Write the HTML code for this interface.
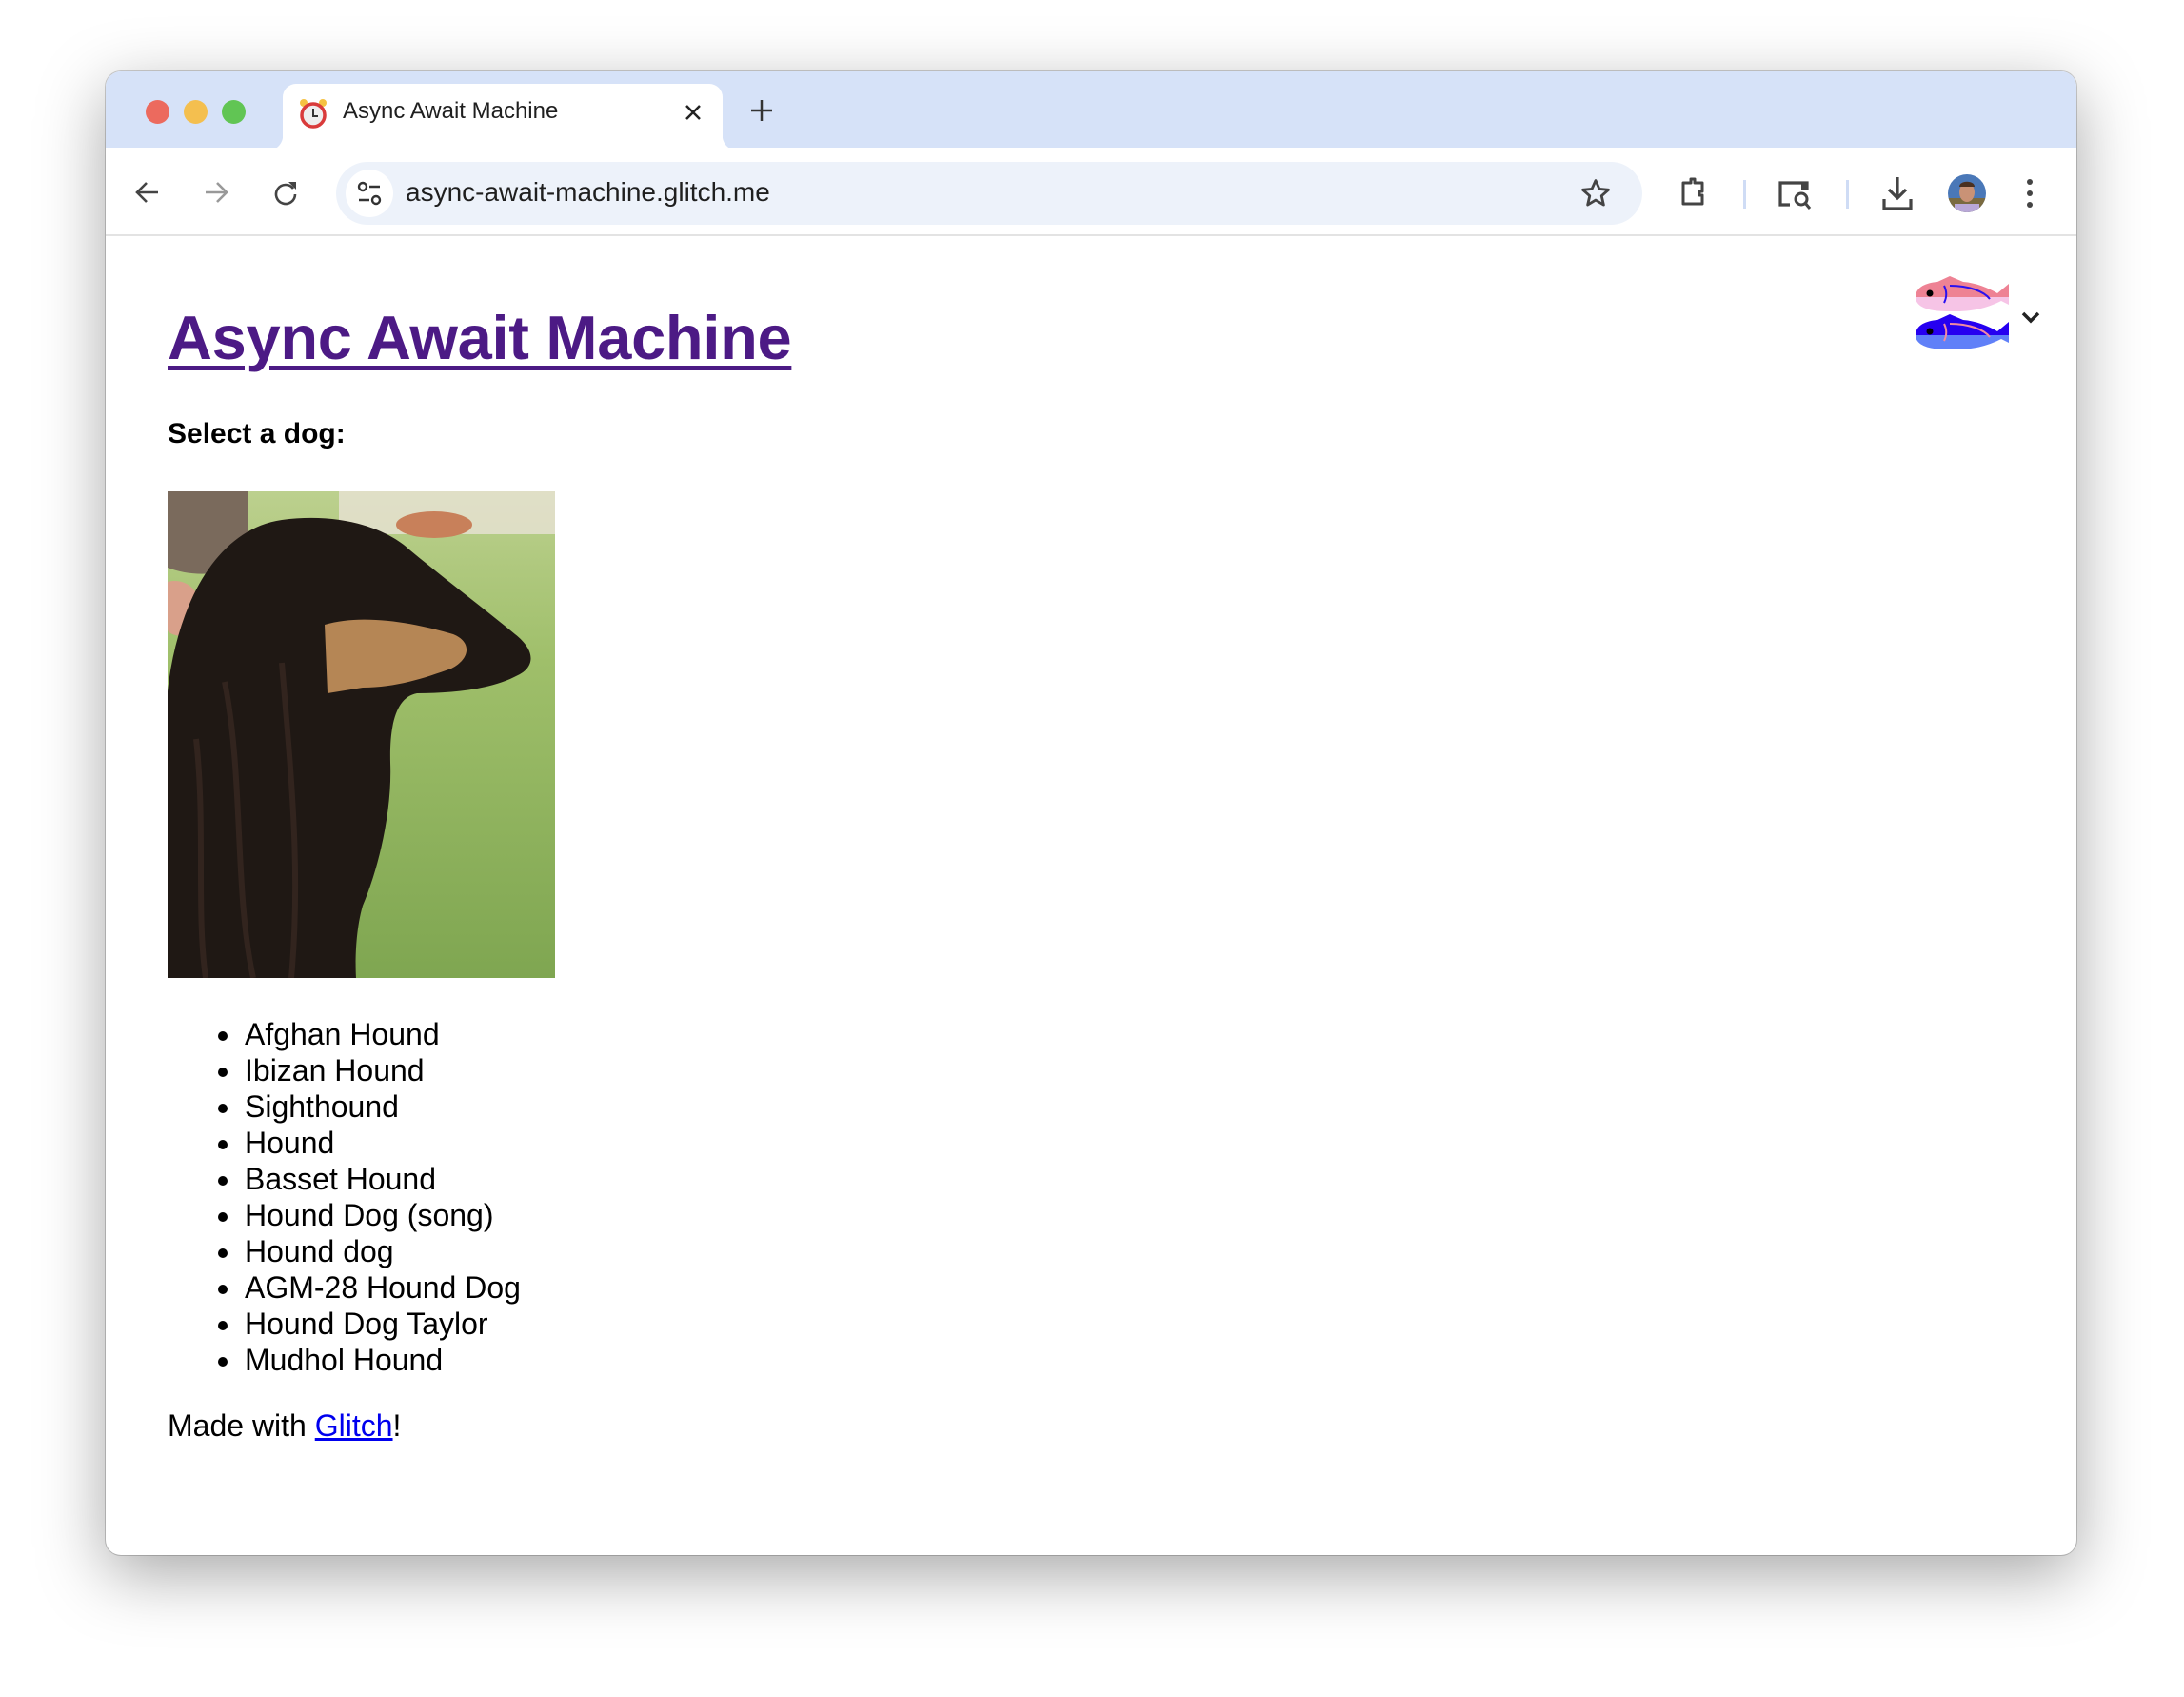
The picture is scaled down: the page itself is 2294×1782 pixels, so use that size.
<!DOCTYPE html>
<html><head><meta charset="utf-8"><style>
*{margin:0;padding:0;box-sizing:border-box}
body{width:2294px;height:1782px;background:#fff;position:relative;overflow:hidden;font-family:"Liberation Sans",Arial,sans-serif}
.win{position:absolute;left:111px;top:75px;width:2070px;height:1558px;border-radius:16px;background:#fff;box-shadow:0 20px 70px rgba(0,0,0,.35),0 0 0 1px rgba(0,0,0,.18);overflow:hidden}
.tabbar{position:absolute;left:0;top:0;width:100%;height:80px;background:#d6e2f8}
.dot{position:absolute;top:30px;width:25px;height:25px;border-radius:50%}
.tab{position:absolute;left:186px;top:13px;width:462px;height:70px;background:#fff;border-radius:14px 14px 0 0}
.tab:before,.tab:after{content:"";position:absolute;bottom:0;width:16px;height:16px}
.tab:before{left:-16px;background:radial-gradient(circle at 0 0,#d6e2f8 16px,#fff 16.5px)}
.tab:after{right:-16px;background:radial-gradient(circle at 100% 0,#d6e2f8 16px,#fff 16.5px)}
.toolbar{position:absolute;left:0;top:80px;width:100%;height:93px;background:#fff;border-bottom:2px solid #e3e3e3}
.omni{position:absolute;left:242px;top:15px;width:1372px;height:66px;border-radius:33px;background:#edf2fa}
.ic{position:absolute}
.content{position:absolute;left:0;top:175px;width:100%}
h1{position:absolute;left:65px;top:67px;font-size:65px;font-weight:bold;color:#4c1a85;text-decoration:underline;text-decoration-thickness:5px;text-underline-offset:7px;white-space:nowrap;letter-spacing:-0.3px}
h3{position:absolute;left:65px;top:189px;font-size:30px;font-weight:bold;color:#000}
ul{position:absolute;left:65px;top:817px;list-style:none;font-size:32px;line-height:38px}
ul li{position:relative;padding-left:81px}
ul li:before{content:"";position:absolute;left:53px;top:16px;width:10px;height:10px;border-radius:50%;background:#000}
.made{position:absolute;left:65px;top:1229px;font-size:32px}
.made a{color:#0000ee;text-decoration:underline}
</style></head><body>
<div class="win">
 <div class="tabbar">
  <div class="dot" style="left:42px;background:#ec6a5e"></div>
  <div class="dot" style="left:82px;background:#f4bf4f"></div>
  <div class="dot" style="left:122px;background:#61c554"></div>
  <div class="tab">
   <svg class="ic" style="left:15px;top:14px" width="34" height="34" viewBox="0 0 34 34"><circle cx="7" cy="6" r="4" fill="#f5c242"/><circle cx="27" cy="6" r="4" fill="#f5c242"/><circle cx="17" cy="19" r="12" fill="#eee" stroke="#d93b3b" stroke-width="3.5"/><path d="M17 12v8h5" stroke="#333" stroke-width="2" fill="none"/></svg>
   <div style="position:absolute;left:63px;top:15px;font-size:24px;color:#1f1f1f">Async Await Machine</div>
   <svg class="ic" style="left:421px;top:20px" width="20" height="20" viewBox="0 0 20 20"><path d="M3 3L17 17M17 3L3 17" stroke="#222" stroke-width="2.5"/></svg>
  </div>
  <svg class="ic" style="left:676px;top:28px" width="26" height="26" viewBox="0 0 26 26"><path d="M13 2v22M2 13h22" stroke="#333" stroke-width="2.5"/></svg>
 </div>
 <div class="toolbar">
  <svg class="ic" style="left:30px;top:33px" width="28" height="28" viewBox="0 0 28 28"><path d="M25 14H4M13 4L3 14l10 10" stroke="#444" stroke-width="2.6" fill="none"/></svg>
  <svg class="ic" style="left:102px;top:33px" width="28" height="28" viewBox="0 0 28 28"><path d="M3 14h21M15 4l10 10-10 10" stroke="#999" stroke-width="2.6" fill="none"/></svg>
  <svg class="ic" style="left:175px;top:33px" width="28" height="28" viewBox="0 0 28 28"><path d="M22 10A10 10 0 1 0 24 16" stroke="#444" stroke-width="2.6" fill="none"/><path d="M17 3h8v8z" fill="#444"/></svg>
  <div class="omni">
   <div style="position:absolute;left:10px;top:8px;width:50px;height:50px;border-radius:50%;background:#fff"></div>
   <svg class="ic" style="left:20px;top:18px" width="30" height="30" viewBox="0 0 30 30"><circle cx="8" cy="8" r="4" stroke="#333" stroke-width="2.4" fill="none"/><path d="M15 8h11M4 22h11" stroke="#333" stroke-width="2.6"/><circle cx="22" cy="22" r="4" stroke="#333" stroke-width="2.4" fill="none"/></svg>
   <div style="position:absolute;left:73px;top:16px;font-size:28px;color:#1f1f1f">async-await-machine.glitch.me</div>
   <svg class="ic" style="left:1306px;top:16px" width="34" height="34" viewBox="0 0 24 24"><path d="M12 2.5l2.8 6.3 6.7.6-5.1 4.5 1.5 6.6L12 17l-5.9 3.5 1.5-6.6-5.1-4.5 6.7-.6z" stroke="#444" stroke-width="2" fill="none" stroke-linejoin="round"/></svg>
  </div>
  <svg class="ic" style="left:1650px;top:30px" width="36" height="36" viewBox="0 0 36 36"><path d="M7 7h8v-4h4v4h8v9h-3v4h3v9H7z" stroke="#444" stroke-width="3" fill="none" stroke-linejoin="round"/></svg>
  <div style="position:absolute;left:1720px;top:34px;width:3px;height:30px;background:#cfdcf5"></div>
  <svg class="ic" style="left:1755px;top:32px" width="40" height="36" viewBox="0 0 40 36"><path d="M14 28H4V5h28v8" stroke="#444" stroke-width="3.2" fill="none"/><path d="M26 5h6v8h-6z" fill="#444"/><circle cx="26" cy="22" r="6" stroke="#444" stroke-width="3" fill="none"/><path d="M30 26l5 6" stroke="#444" stroke-width="3"/></svg>
  <div style="position:absolute;left:1828px;top:34px;width:3px;height:30px;background:#cfdcf5"></div>
  <svg class="ic" style="left:1864px;top:28px" width="36" height="40" viewBox="0 0 36 40"><path d="M18 3v22M9 16l9 9 9-9" stroke="#444" stroke-width="3.2" fill="none"/><path d="M4 26v10h28V26" stroke="#444" stroke-width="3.2" fill="none"/></svg>
  <svg class="ic" style="left:1934px;top:27px" width="42" height="42" viewBox="0 0 42 42"><defs><clipPath id="av"><circle cx="21" cy="21" r="20"/></clipPath></defs><g clip-path="url(#av)"><rect width="42" height="42" fill="#4a78b8"/><rect y="26" width="42" height="16" fill="#7a6a40"/><ellipse cx="21" cy="20" rx="8" ry="10" fill="#c99276"/><path d="M13 14c0-7 16-7 16 0" fill="#4a3020"/><rect x="8" y="32" width="26" height="12" fill="#b9a8d8"/></g></svg>
  <svg class="ic" style="left:2016px;top:30px" width="10" height="36" viewBox="0 0 10 36"><circle cx="5" cy="6" r="3" fill="#444"/><circle cx="5" cy="18" r="3" fill="#444"/><circle cx="5" cy="30" r="3" fill="#444"/></svg>
 </div>
 <div class="content">
  <h1>Async Await Machine</h1>
  <h3>Select a dog:</h3>
  <svg style="position:absolute;left:65px;top:266px" width="407" height="511" viewBox="0 0 407 511">
   <defs><linearGradient id="g" x1="0" y1="0" x2="0" y2="1"><stop offset="0" stop-color="#bcd08e"/><stop offset=".35" stop-color="#9fbf6a"/><stop offset="1" stop-color="#7fa651"/></linearGradient></defs>
   <rect width="407" height="511" fill="url(#g)"/>
   <rect x="180" y="0" width="227" height="45" fill="#e8e2d4" opacity=".8"/>
   <ellipse cx="280" cy="35" rx="40" ry="14" fill="#c8805a"/>
   <path d="M0 0h85v70c-20 20-60 20-85 10z" fill="#7a6a5c"/>
   <path d="M0 95c20-5 35 10 35 30l-5 25c-15 5-30 0-30-5z" fill="#d9a08a"/>
   <path d="M0 210C10 120 50 40 120 30C180 22 230 38 255 62C295 95 335 125 365 150C388 168 385 185 368 193C340 208 300 212 262 212C240 216 233 245 234 285C236 335 222 395 205 435C195 470 198 511 198 511L0 511Z" fill="#1f1814"/>
   <path d="M165 140C205 128 260 138 300 150C320 158 318 176 298 186C270 196 240 206 205 206L168 212Z" fill="#b58655"/>
   <path d="M60 200C80 300 70 420 90 511M120 180C130 300 140 400 130 511M30 260C40 350 30 440 40 511" stroke="#3a2a22" stroke-width="6" fill="none" opacity=".7"/>
  </svg>
  <ul>
   <li>Afghan Hound</li><li>Ibizan Hound</li><li>Sighthound</li><li>Hound</li><li>Basset Hound</li><li>Hound Dog (song)</li><li>Hound dog</li><li>AGM-28 Hound Dog</li><li>Hound Dog Taylor</li><li>Mudhol Hound</li>
  </ul>
  <div class="made">Made with <a>Glitch</a>!</div>
  <svg style="position:absolute;left:1899px;top:40px" width="102" height="80" viewBox="0 0 102 80">
   <defs>
    <path id="f" d="M2 22C2 12 12 7 25 6L38 0L52 6C65 7 78 12 88 18L100 8L100 30L92 26C80 32 65 37 45 37L35 37C15 37 2 32 2 22Z"/>
    <clipPath id="fc"><use href="#f"/></clipPath>
   </defs>
   <g clip-path="url(#fc)"><rect width="102" height="22" fill="#ee8294"/><rect y="22" width="102" height="20" fill="#f6c4e6"/></g>
   <circle cx="17" cy="18" r="3.5" fill="#000"/><path d="M32 10c3 6 3 12 0 18M38 10c20 0 36 6 42 14" stroke="#2a10f0" stroke-width="2" fill="none"/>
   <g transform="translate(0,40)"><g clip-path="url(#fc)"><rect width="102" height="22" fill="#2600f0"/><rect y="22" width="102" height="20" fill="#6080f8"/></g>
   <circle cx="17" cy="18" r="3.5" fill="#000"/><path d="M32 10c3 6 3 12 0 18M38 10c20 0 36 6 42 14" stroke="#f08aa0" stroke-width="2" fill="none"/></g>
  </svg>
  <svg style="position:absolute;left:2012px;top:77px" width="20" height="13" viewBox="0 0 20 13"><path d="M2 2l8 8 8-8" stroke="#222" stroke-width="3.5" fill="none"/></svg>
 </div>
</div>
</body></html>
